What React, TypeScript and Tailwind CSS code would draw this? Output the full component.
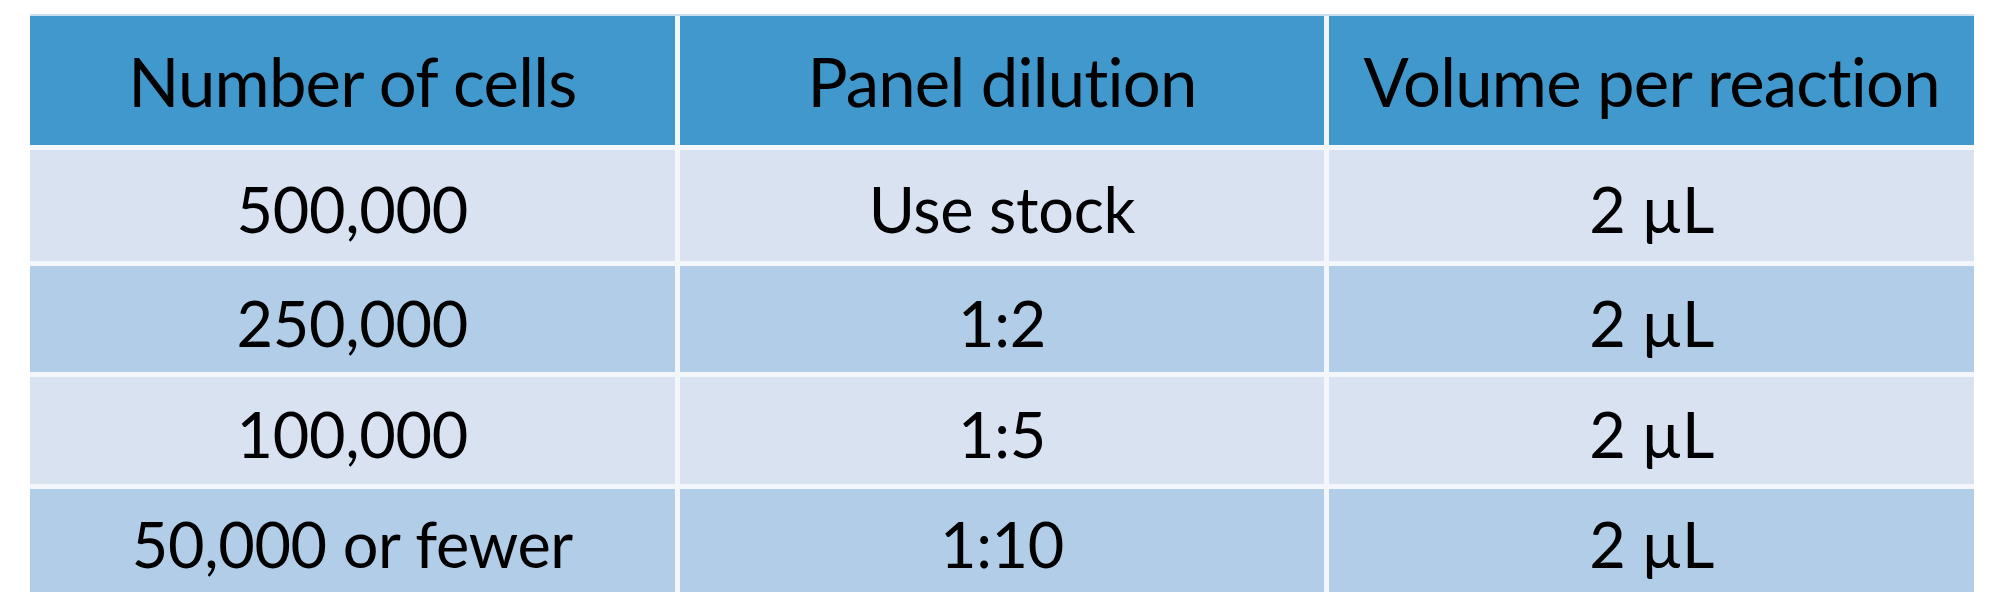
import React from 'react';

const rows = [
  { cells: '500,000', dilution: 'Use stock', volume: '2 µL', tone: 'light', h: 'h-[111px]' },
  { cells: '250,000', dilution: '1:2', volume: '2 µL', tone: 'dark', h: 'h-[106px]' },
  { cells: '100,000', dilution: '1:5', volume: '2 µL', tone: 'light', h: 'h-[107px]' },
  { cells: '50,000 or fewer', dilution: '1:10', volume: '2 µL', tone: 'dark', h: 'h-[103px]' },
];

const headers = ['Number of cells', 'Panel dilution', 'Volume per reaction'];

const App: React.FC = () => {
  return (
    <div className="w-[2000px] h-[604px] bg-white pl-[30px] pt-[16px] font-['Lato',sans-serif] text-black">
      <div className="w-[1944px] grid grid-cols-3 gap-[5px] bg-[#f3f7fc] shadow-[0_-2px_0_#c9e0f2]">
        {headers.map((h) => (
          <div key={h} className="h-[129px] bg-[#4198cd] flex items-center justify-center pt-[2px] text-[67px] tracking-[-0.8px]">
            {h}
          </div>
        ))}
        {rows.map((r) =>
          [r.cells, r.dilution, r.volume].map((v, i) => (
            <div
              key={r.cells + i}
              className={
                r.h +
                ' flex items-center justify-center pt-[8px] text-[63px] tracking-[-0.3px] ' +
                (r.tone === 'light' ? 'bg-[#d8e2f1]' : 'bg-[#b2cde7]')
              }
            >
              {v}
            </div>
          ))
        )}
      </div>
    </div>
  );
};

export default App;
